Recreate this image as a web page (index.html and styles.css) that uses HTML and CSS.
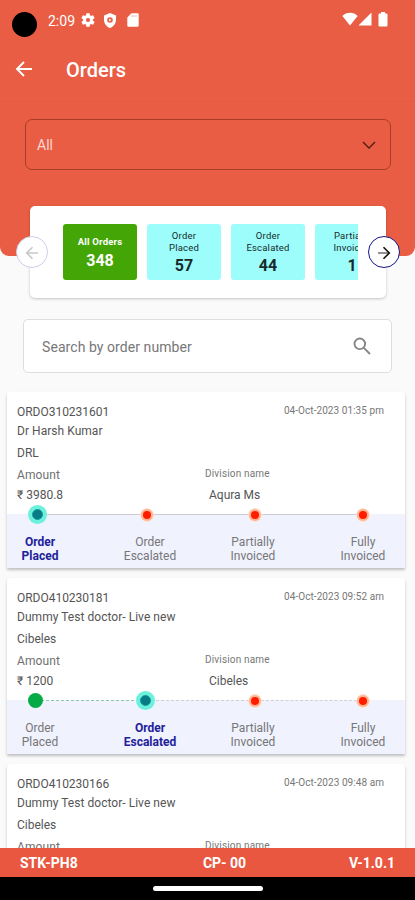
FILE: index.html
```html
<!DOCTYPE html>
<html lang="en">
<head>
<meta charset="utf-8">
<title>Orders</title>
<link rel="stylesheet" href="styles.css">
</head>
<body>
<div class="screen">
  <header class="header">
    <div class="status">
      <span class="camera"></span>
      <span class="time">2:09</span>
      <svg class="s-icon gear" viewBox="2 2 20 20"><path fill="#fff" fill-rule="evenodd" d="M19.14 12.94c.04-.3.06-.61.06-.94 0-.32-.02-.64-.07-.94l2.03-1.58c.18-.14.23-.41.12-.61l-1.92-3.32c-.12-.22-.37-.29-.59-.22l-2.39.96c-.5-.38-1.03-.7-1.62-.94l-.36-2.54c-.04-.24-.24-.41-.48-.41h-3.84c-.24 0-.43.17-.47.41l-.36 2.54c-.59.24-1.13.57-1.62.94l-2.39-.96c-.22-.08-.47 0-.59.22L2.74 8.87c-.12.21-.08.47.12.61l2.03 1.58c-.05.3-.09.63-.09.94s.02.64.07.94l-2.03 1.58c-.18.14-.23.41-.12.61l1.92 3.32c.12.22.37.29.59.22l2.39-.96c.5.38 1.03.7 1.62.94l.36 2.54c.05.24.24.41.48.41h3.84c.24 0 .44-.17.47-.41l.36-2.54c.59-.24 1.13-.56 1.62-.94l2.39.96c.22.08.47 0 .59-.22l1.92-3.32c.12-.22.07-.47-.12-.61zM12 15a3 3 0 1 1 0-6 3 3 0 0 1 0 6z"/></svg>
      <svg class="s-icon shield" viewBox="0 0 14 15"><path fill="#fff" fill-rule="evenodd" d="M7 0 13 2.400V7c0 3.600-2.400 6.600-6 8-3.600-1.400-6-4.400-6-8V2.400zM7 4.200a2.800 2.800 0 1 0 0 5.600 2.800 2.800 0 0 0 0-5.600z"/><path fill="#fff" d="M6.200 5.600 8.400 7 6.200 8.400z"/></svg>
      <svg class="s-icon sd" viewBox="0 0 12 14"><path fill="#fff" d="M4.500.3H10.500A1.200 1.200 0 0 1 11.700 1.500V12.500A1.200 1.200 0 0 1 10.500 13.700H1.500A1.200 1.200 0 0 1 .3 12.500V4.500z"/><path stroke="#f3a89b" stroke-width=".8" d="M5 2v2M7 2v2M9 2v2"/></svg>
      <span class="spacer"></span>
      <svg class="s-icon wifi" viewBox="0 0 16 14"><path fill="#fff" d="M8 13.500.4 3.900C2.500 1.900 5 .8 8 .8s5.500 1.100 7.600 3.100z"/></svg>
      <svg class="s-icon signal" viewBox="0 0 14 14"><path fill="#fff" d="M.5 13.500h13V.5z"/></svg>
      <svg class="s-icon battery" viewBox="0 0 10 15"><path fill="#fff" d="M3 0h4v1.500h1.500a1 1 0 0 1 1 1V13.500a1 1 0 0 1-1 1h-7a1 1 0 0 1-1-1V2.500a1 1 0 0 1 1-1H3z"/></svg>
    </div>
    <div class="appbar">
      <svg class="back" viewBox="0 0 18 18"><path d="M17 9H2.500M9 2 2 9 9 16"/></svg>
      <h1 class="title">Orders</h1>
    </div>
    <div class="select"><span class="select-text">All</span><svg class="chevron" viewBox="0 0 14 8"><path d="M1 1l6 6 6-6"/></svg></div>
  </header>

  <section class="stats">
    <button class="nav prev"><svg viewBox="0 0 14 14"><path d="M13 7H2M7.500 1.200 1.700 7 7.500 12.800"/></svg></button>
    <div class="tiles">
      <div class="tile active"><span class="tile-name">All Orders</span><b>348</b></div>
      <div class="tile"><span class="tile-name">Order<br>Placed</span><b>57</b></div>
      <div class="tile"><span class="tile-name">Order<br>Escalated</span><b>44</b></div>
      <div class="tile"><span class="tile-name">Partially<br>Invoiced</span><b>1</b></div>
    </div>
    <button class="nav next"><svg viewBox="0 0 14 14"><path class="shaft" d="M1 7h11"/><path d="M6.500 1.200 12.300 7 6.500 12.800"/></svg></button>
  </section>

  <div class="search"><span>Search by order number</span><svg viewBox="0 0 18 18"><circle cx="6.800" cy="6.800" r="5.300"/><path d="M10.800 10.800 17 17"/></svg></div>

  <main class="orders">
    <article class="order">
      <div class="details">
        <div class="row"><span class="id">ORDO310231601</span><time class="date">04-Oct-2023 01:35 pm</time></div>
        <div class="name">Dr Harsh Kumar</div>
        <div class="company">DRL</div>
        <div class="pair"><span class="amount">Amount</span><span class="division">Division name</span></div>
        <div class="pair"><span>₹ 3980.8</span><span class="division-value">Aqura Ms</span></div>
      </div>
      <div class="steps">
        <div class="track"><i class="dot current"></i><i class="line"></i><i class="dot todo"></i><i class="line"></i><i class="dot todo"></i><i class="line"></i><i class="dot todo"></i></div>
        <div class="labels"><span class="on">Order<br>Placed</span><span>Order<br>Escalated</span><span>Partially<br>Invoiced</span><span>Fully<br>Invoiced</span></div>
      </div>
    </article>
    <article class="order">
      <div class="details">
        <div class="row"><span class="id">ORDO410230181</span><time class="date">04-Oct-2023 09:52 am</time></div>
        <div class="name">Dummy Test doctor- Live new</div>
        <div class="company">Cibeles</div>
        <div class="pair"><span class="amount">Amount</span><span class="division">Division name</span></div>
        <div class="pair"><span>₹ 1200</span><span class="division-value">Cibeles</span></div>
      </div>
      <div class="steps">
        <div class="track second"><i class="dot done"></i><i class="line dashed green"></i><i class="dot current"></i><i class="line dashed"></i><i class="dot todo"></i><i class="line dashed"></i><i class="dot todo"></i></div>
        <div class="labels"><span>Order<br>Placed</span><span class="on">Order<br>Escalated</span><span>Partially<br>Invoiced</span><span>Fully<br>Invoiced</span></div>
      </div>
    </article>
    <article class="order">
      <div class="details">
        <div class="row"><span class="id">ORDO410230166</span><time class="date">04-Oct-2023 09:48 am</time></div>
        <div class="name">Dummy Test doctor- Live new</div>
        <div class="company">Cibeles</div>
        <div class="pair"><span class="amount">Amount</span><span class="division">Division name</span></div>
      </div>
    </article>
  </main>

  <footer class="footer"><span>STK-PH8</span><span>CP- 00</span><span>V-1.0.1</span></footer>
  <div class="gesture"><span class="handle"></span></div>
</div>
</body>
</html>
```
FILE: styles.css
```css
* { box-sizing: border-box; }
body { margin: 0; background: #fafafa; font-family: Roboto, "Liberation Sans", sans-serif; }
.screen { width: 415px; height: 900px; display: flex; flex-direction: column; overflow: hidden; background: #fafafa; }
.header { height: 256px; flex: none; background: #e95d44; border-radius: 0 0 9px 9px; }

.status { display: flex; align-items: flex-start; height: 44px; padding: 12px 27px 0 12px; }
.camera { width: 25px; height: 25px; border-radius: 50%; background: #000; }
.time { margin-left: 11px; width: 29px; font-size: 14px; line-height: 18px; color: #fff; white-space: nowrap; }
.s-icon { display: block; flex: none; }
.gear { width: 14px; height: 14px; margin: 1px 0 0 4px; }
.shield { width: 14px; height: 15px; margin: 1px 0 0 8px; }
.sd { width: 12px; height: 14px; margin: 1px 0 0 10px; }
.spacer { flex: 1; }
.wifi { width: 16px; height: 14px; }
.signal { width: 14px; height: 14px; }
.battery { width: 10px; height: 15px; margin-left: 6px; }

.appbar { display: flex; align-items: center; height: 55px; padding: 0 0 5px 15px; border-bottom: 1px solid #e5634b; }
.back { width: 18px; height: 18px; fill: none; stroke: #fff; stroke-width: 1.9; }
.title { margin: 2px 0 0 33px; font-size: 20px; font-weight: 500; line-height: 26px; color: #fff; }

.select { display: flex; align-items: center; justify-content: space-between; height: 51px; margin: 20px 24px 0 25px; padding: 0 14px 0 11px; border: 1px solid #a73c29; border-radius: 7px; }
.select-text { font-size: 14px; color: #fbd8d0; }
.chevron { width: 14px; height: 8px; fill: none; stroke: #4f1a12; stroke-width: 1.3; }

.stats { display: flex; align-items: center; flex: none; height: 92px; margin: -50px 29px 0 30px; background: #fff; border-radius: 5px; box-shadow: 0 1px 3px rgba(0,0,0,.22); }
.nav { display: flex; align-items: center; justify-content: center; flex: none; width: 32px; height: 32px; padding: 0; border: 1.500px solid #161487; border-radius: 50%; background: #fff; }
.nav svg { width: 14px; height: 14px; margin-top: 2px; fill: none; stroke: #111; stroke-width: 1.6; }
.nav .shaft { stroke: #777; }
.prev { margin-left: -14px; border-color: #cfcdea; }
.prev svg { stroke: #c8c8c8; }
.next { margin-left: 10px; }
.tiles { display: flex; gap: 10px; width: 295px; margin-left: 15px; overflow: hidden; flex: none; }
.tile { display: flex; flex-direction: column; align-items: center; flex: none; width: 74px; height: 56px; padding-top: 6px; border-radius: 3px; background: #9cfdfb; color: #172b2b; text-align: center; }
.tile-name { font-size: 9.500px; line-height: 11.500px; letter-spacing: .2px; }
.tile b { margin-top: 2px; font-size: 16px; font-weight: 700; line-height: 21px; }
.active { padding-top: 12px; background: #43a606; color: #fff; }
.active .tile-name { font-weight: 700; }

.search { display: flex; align-items: center; justify-content: space-between; flex: none; height: 54px; margin: 21px 23px 0 23px; padding: 0 20px 0 18px; border: 1px solid #dedede; border-radius: 5px; background: #fff; font-size: 14px; color: #777; }
.search span { margin-top: 1px; letter-spacing: .07px; }
.search svg { width: 18px; height: 18px; fill: none; stroke: #858585; stroke-width: 1.9; }

.orders { display: flex; flex-direction: column; gap: 10px; flex: 1; min-height: 0; padding: 19px 10px 0 7px; overflow: hidden; }
.order { flex: none; height: 176px; border-radius: 4px 4px 1px 1px; background: #fff; box-shadow: 0 2px 3px rgba(0,0,0,.24); }
.details { height: 122px; padding: 12px 21px 0 10px; font-size: 12px; color: #555; }
.row { display: flex; justify-content: space-between; height: 18px; line-height: 17px; }
.id { letter-spacing: -.02px; }
.date { font-size: 10px; line-height: 13px; letter-spacing: .06px; color: #777; }
.name { height: 21px; line-height: 19px; letter-spacing: .04px; }
.company { height: 23px; line-height: 20px; }
.pair { display: grid; grid-template-columns: 188px 1fr; height: 20px; line-height: 18px; }
.amount { color: #707070; letter-spacing: .1px; }
.division { font-size: 10px; line-height: 15px; letter-spacing: .16px; color: #777; }
.division-value { padding-left: 4px; }

.steps { height: 54px; background: #f0f2fe; }
.track { display: grid; grid-template-columns: 20px 90px 20px 88px 20px 88px 20px; align-items: center; justify-items: center; height: 21px; margin-left: 20px; transform: translateY(-10px); }
.second { grid-template-columns: 20px 90px 20px 90px 20px 88px 20px; margin-left: 18px; }
.line { justify-self: stretch; height: 1px; margin: 0 -4px; background: #cbccd6; }
.dashed { background: none; border-top: 1px dashed #cfcfda; }
.green { border-color: #8fc9ab; }
.dot { position: relative; border-radius: 50%; }
.current { width: 11px; height: 11px; background: #087b85; border: 1px solid #149b9d; box-shadow: 0 0 0 4px #6cf1dd; }
.done { width: 15px; height: 15px; background: #05ac45; }
.todo { width: 8px; height: 8px; background: #ff1d00; box-shadow: 0 0 0 2px #ffb391, 0 0 0 3px #ffe1d3; }
.labels { display: grid; grid-template-columns: 66px 154px 52px 168px; font-size: 12px; line-height: 14px; color: #777; text-align: center; }
.on { color: #22219a; font-weight: 700; }

.footer { display: grid; grid-template-columns: 1fr 1fr 1fr; align-items: center; flex: none; height: 29px; padding: 0 20px; background: #e95740; color: #fff; font-size: 14px; font-weight: 700; }
.footer span:nth-child(2) { text-align: center; padding-left: 34px; }
.footer span:nth-child(3) { text-align: right; }
.gesture { display: flex; justify-content: center; flex: none; height: 23px; padding-top: 9px; background: #000; }
.handle { width: 110px; height: 5px; border-radius: 3px; background: #fff; }
```
